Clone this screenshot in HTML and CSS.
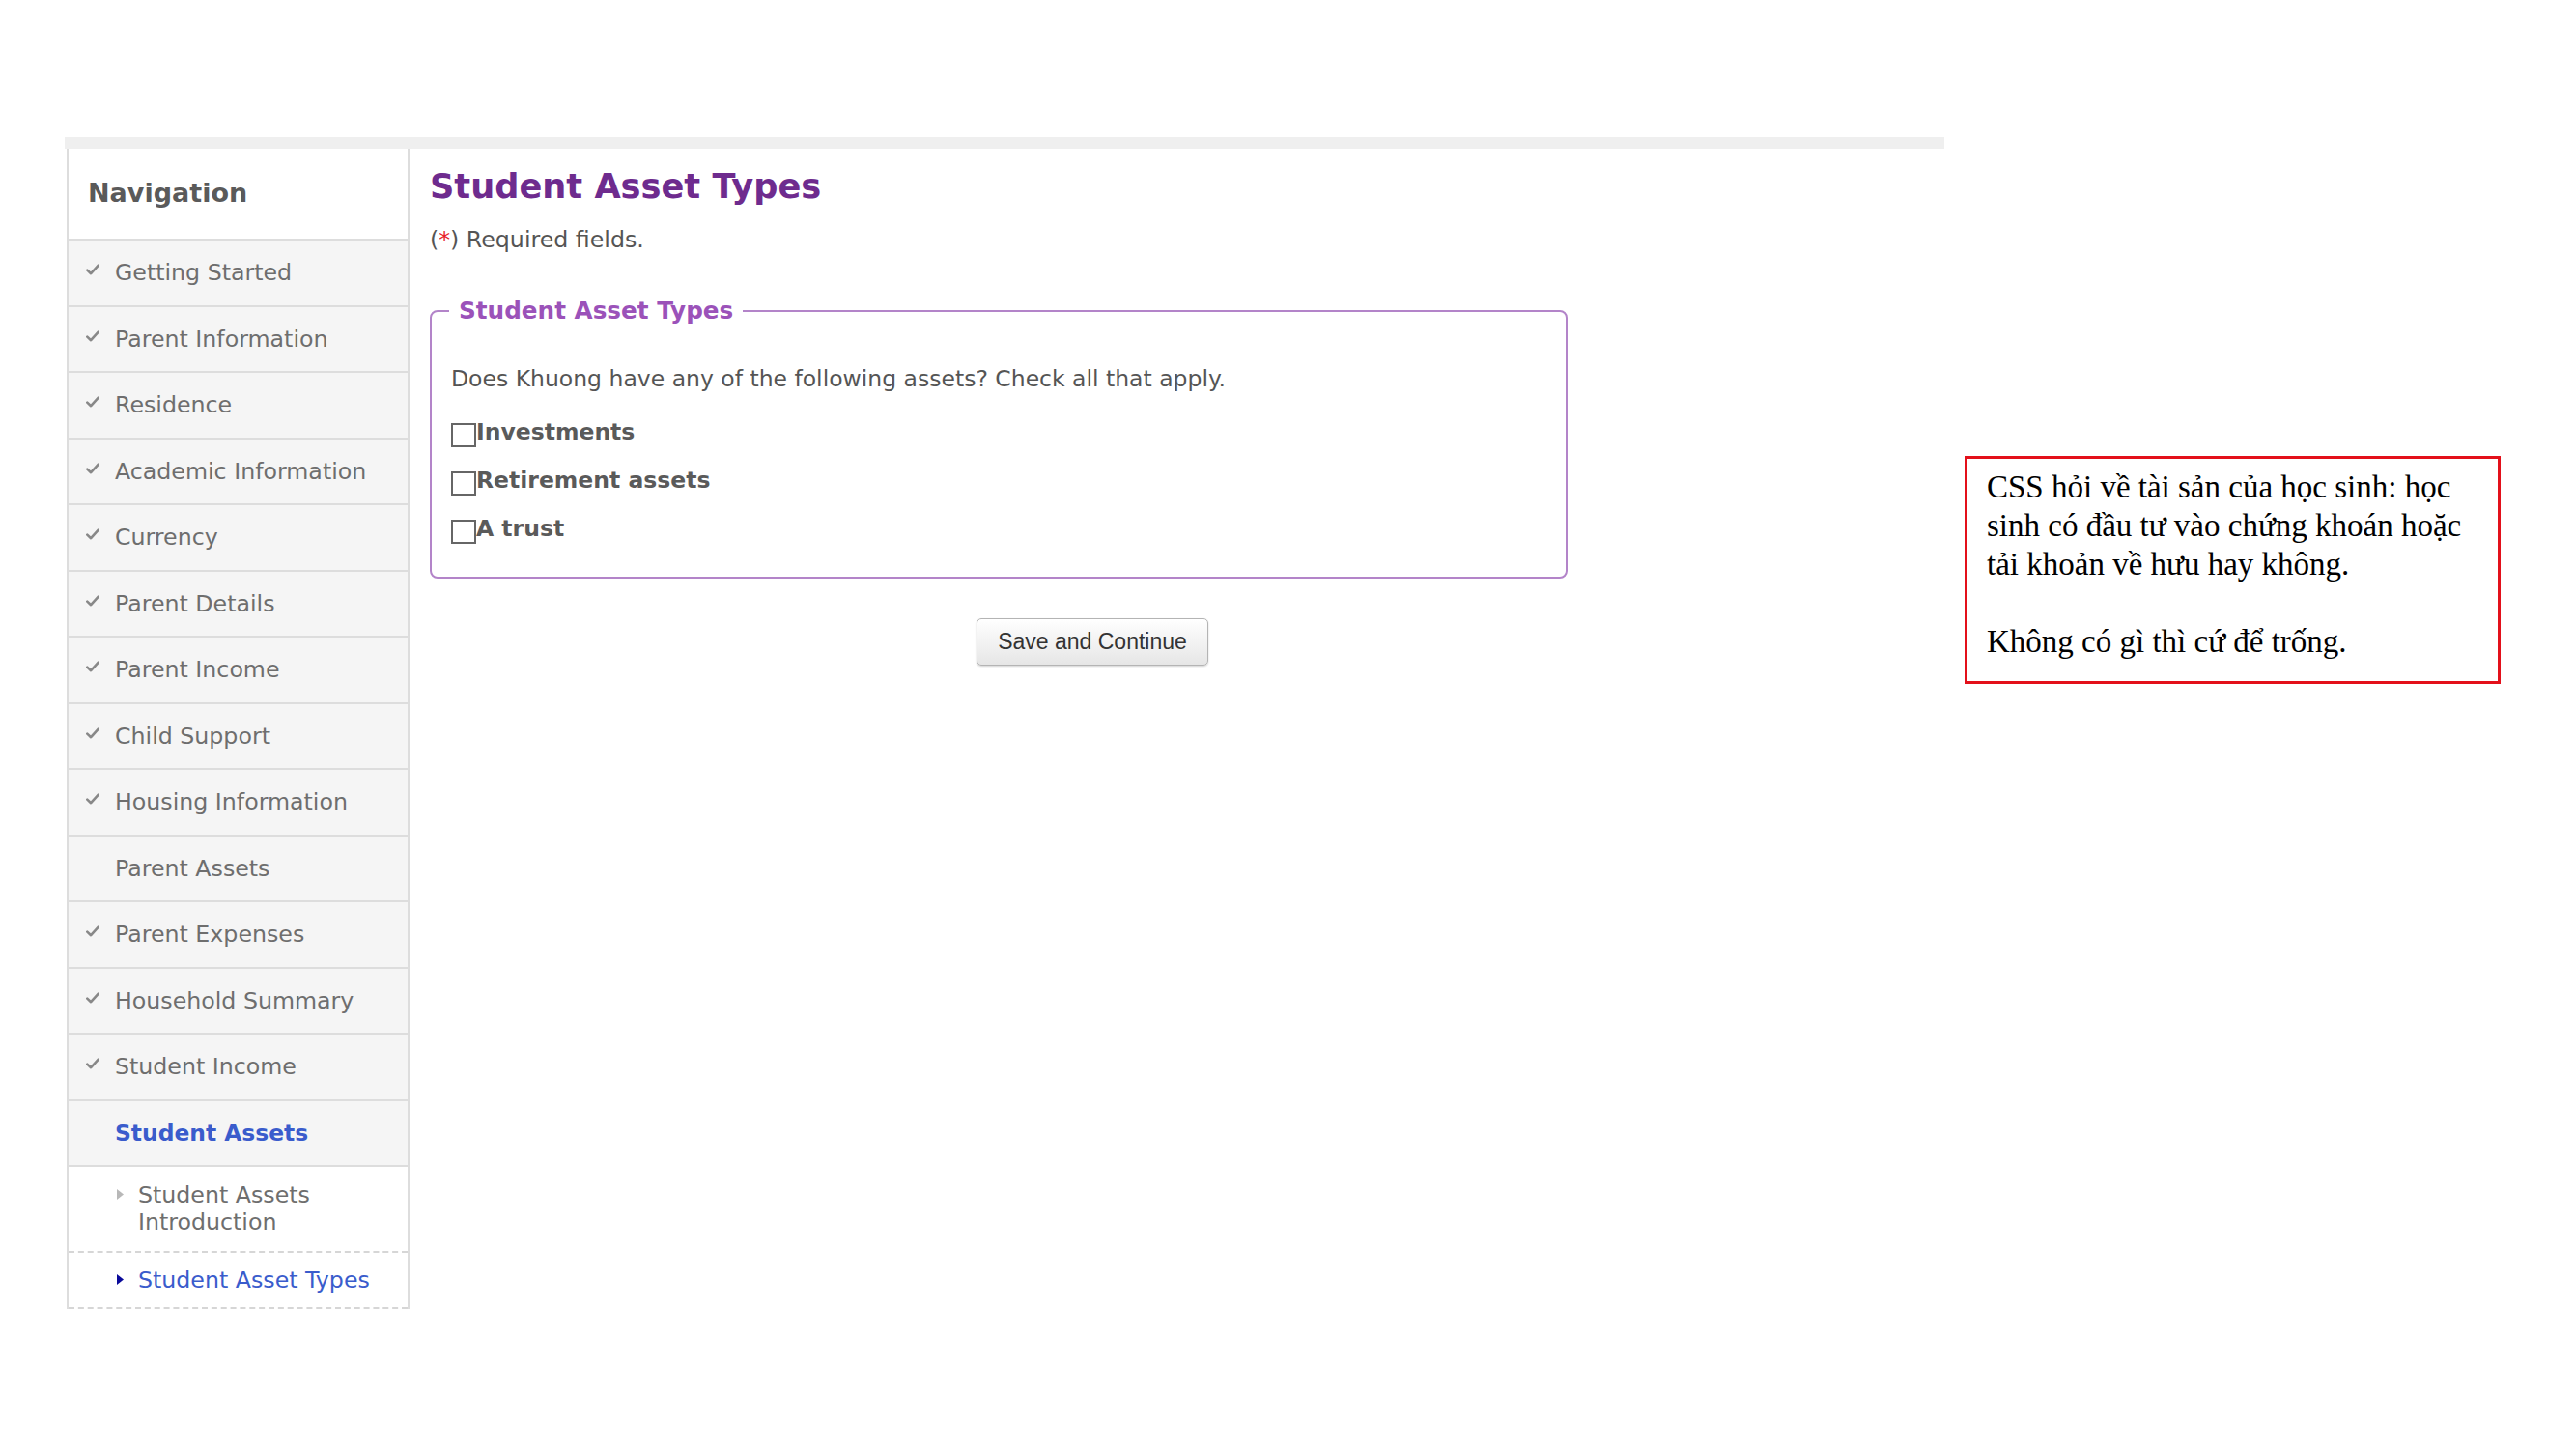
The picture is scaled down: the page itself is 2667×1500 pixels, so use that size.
FILE: index.html
```html
<!DOCTYPE html>
<html lang="en">
<head>
<meta charset="utf-8">
<title>Student Asset Types</title>
<link rel="stylesheet" href="styles.css">
</head>
<body>
<div class="slide">
  <div class="app">
    <div class="topbar"></div>
    <div class="shell">
      <nav class="nav">
        <div class="nav-head">Navigation</div>
        <ul class="nav-list">
          <li class="nav-item done"><span class="check"><svg viewBox="0 0 14 12" width="14" height="12"><path d="M1.3 6.6 L5.1 10.2 L12.8 1.6" fill="none" stroke="#888888" stroke-width="2.6" stroke-linecap="round" stroke-linejoin="round"/></svg></span>Getting Started</li>
          <li class="nav-item done"><span class="check"><svg viewBox="0 0 14 12" width="14" height="12"><path d="M1.3 6.6 L5.1 10.2 L12.8 1.6" fill="none" stroke="#888888" stroke-width="2.6" stroke-linecap="round" stroke-linejoin="round"/></svg></span>Parent Information</li>
          <li class="nav-item done"><span class="check"><svg viewBox="0 0 14 12" width="14" height="12"><path d="M1.3 6.6 L5.1 10.2 L12.8 1.6" fill="none" stroke="#888888" stroke-width="2.6" stroke-linecap="round" stroke-linejoin="round"/></svg></span>Residence</li>
          <li class="nav-item done"><span class="check"><svg viewBox="0 0 14 12" width="14" height="12"><path d="M1.3 6.6 L5.1 10.2 L12.8 1.6" fill="none" stroke="#888888" stroke-width="2.6" stroke-linecap="round" stroke-linejoin="round"/></svg></span>Academic Information</li>
          <li class="nav-item done"><span class="check"><svg viewBox="0 0 14 12" width="14" height="12"><path d="M1.3 6.6 L5.1 10.2 L12.8 1.6" fill="none" stroke="#888888" stroke-width="2.6" stroke-linecap="round" stroke-linejoin="round"/></svg></span>Currency</li>
          <li class="nav-item done"><span class="check"><svg viewBox="0 0 14 12" width="14" height="12"><path d="M1.3 6.6 L5.1 10.2 L12.8 1.6" fill="none" stroke="#888888" stroke-width="2.6" stroke-linecap="round" stroke-linejoin="round"/></svg></span>Parent Details</li>
          <li class="nav-item done"><span class="check"><svg viewBox="0 0 14 12" width="14" height="12"><path d="M1.3 6.6 L5.1 10.2 L12.8 1.6" fill="none" stroke="#888888" stroke-width="2.6" stroke-linecap="round" stroke-linejoin="round"/></svg></span>Parent Income</li>
          <li class="nav-item done"><span class="check"><svg viewBox="0 0 14 12" width="14" height="12"><path d="M1.3 6.6 L5.1 10.2 L12.8 1.6" fill="none" stroke="#888888" stroke-width="2.6" stroke-linecap="round" stroke-linejoin="round"/></svg></span>Child Support</li>
          <li class="nav-item done"><span class="check"><svg viewBox="0 0 14 12" width="14" height="12"><path d="M1.3 6.6 L5.1 10.2 L12.8 1.6" fill="none" stroke="#888888" stroke-width="2.6" stroke-linecap="round" stroke-linejoin="round"/></svg></span>Housing Information</li>
          <li class="nav-item"><span class="check"></span>Parent Assets</li>
          <li class="nav-item done"><span class="check"><svg viewBox="0 0 14 12" width="14" height="12"><path d="M1.3 6.6 L5.1 10.2 L12.8 1.6" fill="none" stroke="#888888" stroke-width="2.6" stroke-linecap="round" stroke-linejoin="round"/></svg></span>Parent Expenses</li>
          <li class="nav-item done"><span class="check"><svg viewBox="0 0 14 12" width="14" height="12"><path d="M1.3 6.6 L5.1 10.2 L12.8 1.6" fill="none" stroke="#888888" stroke-width="2.6" stroke-linecap="round" stroke-linejoin="round"/></svg></span>Household Summary</li>
          <li class="nav-item done"><span class="check"><svg viewBox="0 0 14 12" width="14" height="12"><path d="M1.3 6.6 L5.1 10.2 L12.8 1.6" fill="none" stroke="#888888" stroke-width="2.6" stroke-linecap="round" stroke-linejoin="round"/></svg></span>Student Income</li>
          <li class="nav-item current"><span class="check"></span>Student Assets</li>
        </ul>
        <ul class="sub-list">
          <li class="sub-item"><span class="arrow"><svg viewBox="0 0 7 11" width="7" height="11"><path d="M0 0 L7 5.5 L0 11 Z" fill="#b8b8b8"/></svg></span><span class="sub-text">Student Assets Introduction</span></li>
          <li class="sub-item active"><span class="arrow"><svg viewBox="0 0 7 11" width="7" height="11"><path d="M0 0 L7 5.5 L0 11 Z" fill="#0a0a9a"/></svg></span><span class="sub-text">Student Asset Types</span></li>
        </ul>
      </nav>
      <main class="content">
        <h1 class="page-title">Student Asset Types</h1>
        <p class="required">(<span class="star">*</span>) Required fields.</p>
        <fieldset class="group">
          <legend class="group-title">Student Asset Types</legend>
          <p class="question">Does Khuong have any of the following assets? Check all that apply.</p>
          <label class="option"><input type="checkbox" class="box">Investments</label>
          <label class="option"><input type="checkbox" class="box">Retirement assets</label>
          <label class="option"><input type="checkbox" class="box">A trust</label>
        </fieldset>
        <div class="actions">
          <button type="button" class="btn">Save and Continue</button>
        </div>
      </main>
    </div>
  </div>
  <div class="note">
    <p>CSS hỏi về tài sản của học sinh: học sinh có đầu tư vào chứng khoán hoặc tải khoản về hưu hay không.</p>
    <p class="note-gap">Không có gì thì cứ để trống.</p>
  </div>
</div>
</body>
</html>
```
FILE: styles.css
```css
html, body {
  margin: 0;
  padding: 0;
  background: #ffffff;
}

body {
  font-family: "DejaVu Sans", Verdana, sans-serif;
  color: #555555;
}

.slide {
  position: relative;
  width: 2667px;
  height: 1500px;
  box-sizing: border-box;
  padding: 142px 0 0 67px;
}

.app {
  width: 1946px;
}

.topbar {
  height: 12px;
  background: #efefef;
}

.shell {
  display: flex;
  align-items: flex-start;
}

/* ---------- navigation ---------- */
.nav {
  width: 355px;
  margin-left: 2px;
  box-sizing: border-box;
  border-left: 2px solid #dddddd;
  border-right: 2px solid #dddddd;
  background: #ffffff;
}

.nav-head {
  height: 95px;
  box-sizing: border-box;
  border-bottom: 2px solid #dddddd;
  display: flex;
  align-items: center;
  padding: 0 0 3px 20px;
  font-size: 27px;
  font-weight: bold;
  color: #5a5a5a;
}

.nav-list,
.sub-list {
  list-style: none;
  margin: 0;
  padding: 0;
}

.nav-item {
  height: 66.5px;
  border-bottom: 2px solid #dddddd;
  background: #f5f5f5;
  display: flex;
  align-items: center;
  padding-left: 18px;
  font-size: 23.7px;
  color: #6e6e6e;
}

.check {
  width: 30px;
  flex: none;
  display: flex;
  align-items: center;
  margin-top: -6px;
}

.nav-item.current {
  font-weight: bold;
  font-size: 23.4px;
  color: #3a5ccc;
}

.sub-item {
  display: flex;
  align-items: flex-start;
  padding: 15px 20px 16px 50px;
  border-bottom: 2px dashed #d6d6d6;
  font-size: 23.7px;
  line-height: 28px;
  color: #6e6e6e;
}

.sub-item.active {
  color: #3a5ccc;
  padding-top: 14px;
  padding-bottom: 14px;
}

.arrow {
  width: 22px;
  flex: none;
  display: flex;
  padding-top: 8px;
}

.sub-text {
  max-width: 240px;
}

/* ---------- content ---------- */
.content {
  flex: 1;
  padding-left: 21px;
}

.page-title {
  margin: 19px 0 0;
  font-size: 35.2px;
  line-height: 40px;
  font-weight: bold;
  color: #6e2b8e;
}

.required {
  margin: 20px 0 0;
  font-size: 23.7px;
  line-height: 30px;
  color: #555555;
}

.star {
  color: #e8202a;
}

.group {
  width: 1178px;
  box-sizing: border-box;
  margin: 44px 0 0;
  padding: 0 20px 34px;
  border: 2px solid #b384c9;
  border-radius: 8px;
}

.group-title {
  padding: 0 10px;
  margin-left: -2px;
  font-size: 24.7px;
  line-height: 30px;
  font-weight: bold;
  color: #9b52b9;
}

.question {
  margin: 40px 0 25px;
  font-size: 23.5px;
  line-height: 30px;
  color: #555555;
}

.option {
  display: block;
  font-size: 23.5px;
  line-height: 30px;
  font-weight: bold;
  color: #5a5a5a;
  margin-bottom: 19px;
}

.option:last-child {
  margin-bottom: 0;
}

.box {
  -webkit-appearance: none;
  appearance: none;
  width: 26px;
  height: 25px;
  margin: 0;
  box-sizing: border-box;
  border: 2px solid #666666;
  background: #ffffff;
  vertical-align: -8px;
}

.actions {
  margin-top: 41px;
  padding-left: 566px;
}

.btn {
  width: 240px;
  height: 49px;
  font-family: "Liberation Sans", Arial, sans-serif;
  font-size: 23px;
  color: #333333;
  background: linear-gradient(#ffffff, #e6e6e6);
  border: 1px solid #b4b4b4;
  border-radius: 5px;
  box-shadow: 0 1px 2px rgba(0, 0, 0, 0.18);
  padding: 0;
}

/* ---------- annotation on the slide ---------- */
.note {
  position: absolute;
  left: 2034px;
  top: 472px;
  width: 555px;
  height: 236px;
  box-sizing: border-box;
  border: 3px solid #e3101a;
  padding: 9px 14px 0 20px;
  font-family: "Liberation Serif", "Times New Roman", serif;
  font-size: 33px;
  line-height: 40px;
  color: #000000;
}

.note p {
  margin: 0;
}

.note .note-gap {
  margin-top: 40px;
}
```
